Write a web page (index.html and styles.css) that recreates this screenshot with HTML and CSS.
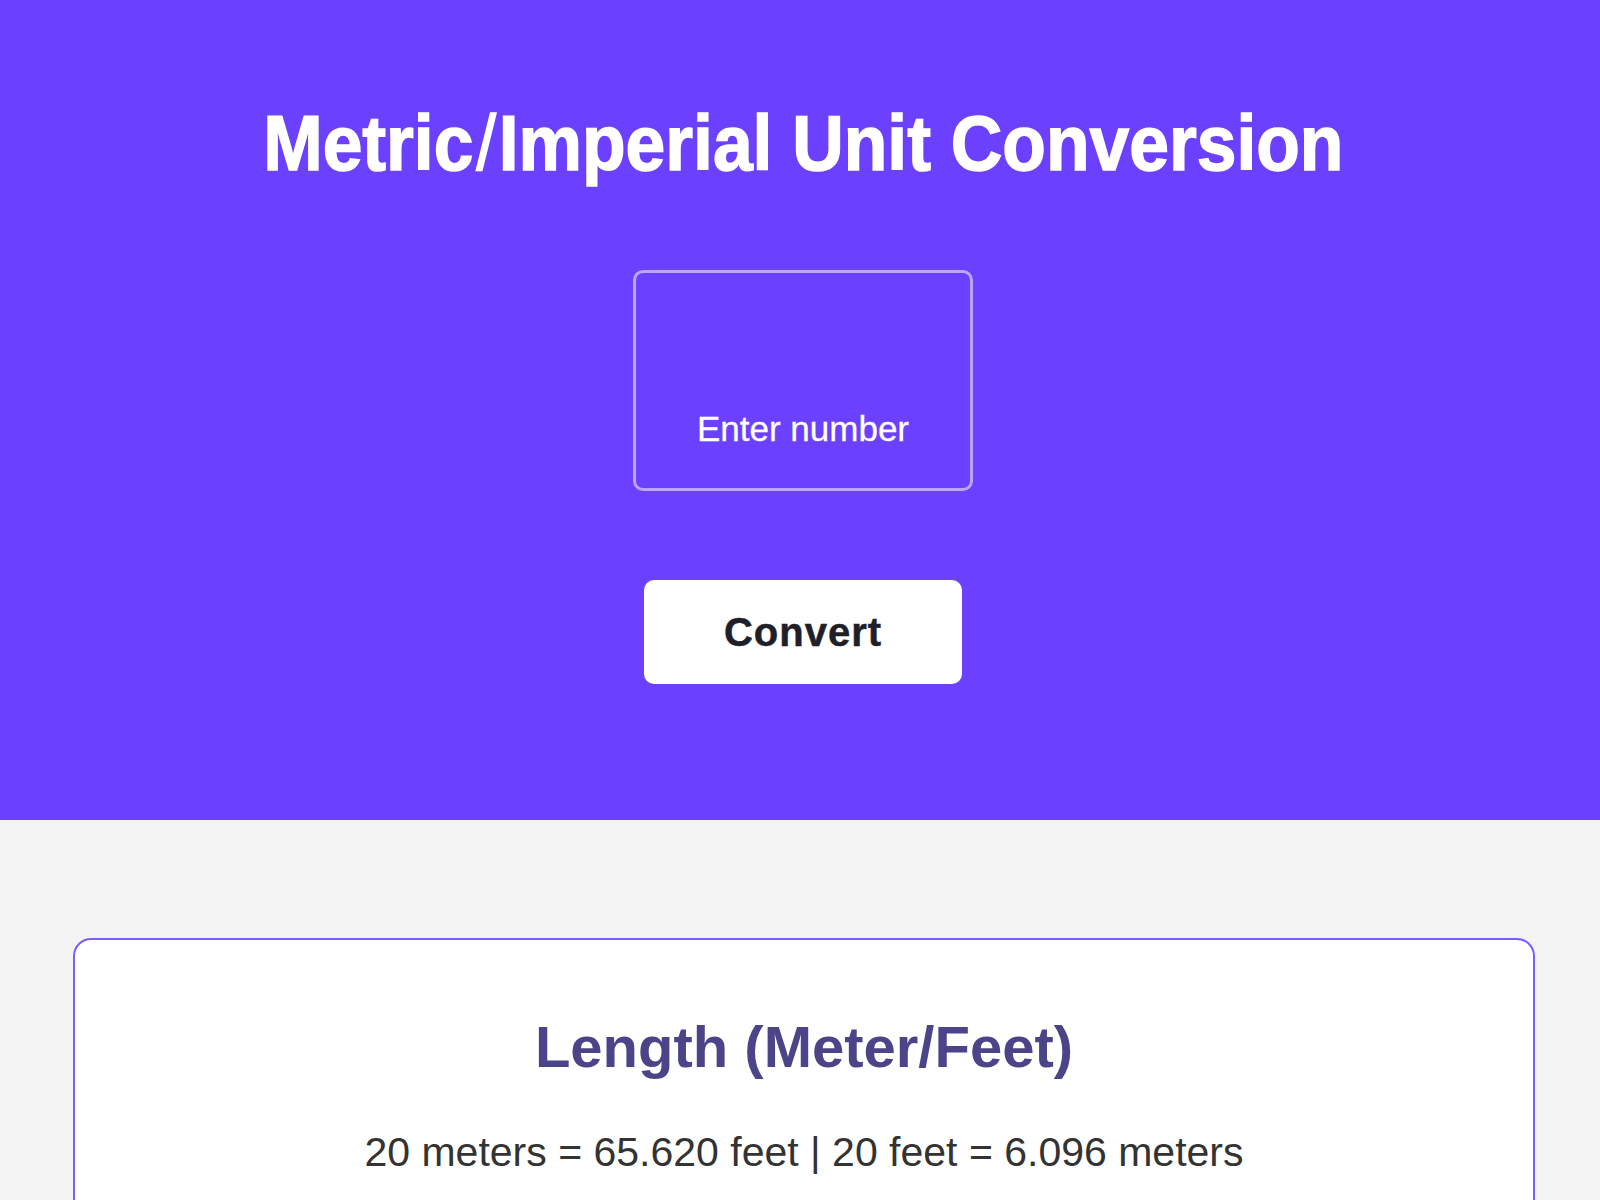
FILE: index.html
```html
<!DOCTYPE html>
<html lang="en">
<head>
<meta charset="utf-8">
<title>Metric/Imperial Unit Conversion</title>
<link rel="stylesheet" href="styles.css">
</head>
<body>
  <header class="hero">
    <h1 class="hero-title">Metric<span class="slash">/</span>Imperial Unit Conversion</h1>
    <input class="hero-input" type="text" placeholder="Enter number">
    <button class="hero-button" type="button">Convert</button>
  </header>
  <main class="results">
    <section class="card">
      <h2 class="card-title">Length (Meter/Feet)</h2>
      <p class="card-text">20 meters = 65.620 feet | 20 feet = 6.096 meters</p>
    </section>
  </main>
</body>
</html>
```

FILE: styles.css
```css
html, body {
  margin: 0;
  padding: 0;
}

body {
  background: #f3f3f3;
  font-family: "Liberation Sans", Arial, sans-serif;
  height: 1200px;
  overflow: hidden;
}

.hero {
  background: #6b41ff;
  height: 820px;
  box-sizing: border-box;
  padding: 97px 0 0 6px;
  display: flex;
  flex-direction: column;
  align-items: center;
}

.hero-title {
  margin: 0;
  color: #ffffff;
  font-size: 78px;
  line-height: 92px;
  font-weight: 700;
  letter-spacing: 0;
  -webkit-text-stroke: 1.5px #ffffff;
  transform: scaleX(0.915);
  white-space: nowrap;
}

.slash {
  font-weight: 400;
  padding: 0 3px;
}

.hero-input {
  margin-top: 81px;
  width: 340px;
  height: 221px;
  box-sizing: border-box;
  padding: 135px 10px 39px;
  border: 3px solid #bba5ff;
  border-radius: 10px;
  background: transparent;
  color: #ffffff;
  font-family: "Liberation Sans", Arial, sans-serif;
  font-size: 35px;
  line-height: 41px;
  text-align: center;
  outline: none;
  -webkit-text-stroke: 0.3px #ffffff;
}

.hero-input::placeholder {
  color: #ffffff;
  opacity: 1;
}

.hero-button {
  margin-top: 89px;
  width: 318px;
  height: 104px;
  border: none;
  border-radius: 10px;
  background: #ffffff;
  color: #1f1f2a;
  font-family: "Liberation Sans", Arial, sans-serif;
  font-size: 40px;
  font-weight: 700;
  letter-spacing: 1px;
  -webkit-text-stroke: 0.5px #1f1f2a;
  cursor: pointer;
}

.results {
  padding: 118px 65px 0 73px;
}

.card {
  background: #ffffff;
  border: 2px solid #7a5eff;
  border-radius: 18px;
  padding: 73px 20px 60px;
  text-align: center;
}

.card-title {
  margin: 0;
  color: #4b4488;
  font-size: 58px;
  font-weight: 700;
  line-height: 67px;
}

.card-text {
  margin: 49px 0 0;
  color: #333333;
  font-size: 41px;
  line-height: 46px;
}
```
